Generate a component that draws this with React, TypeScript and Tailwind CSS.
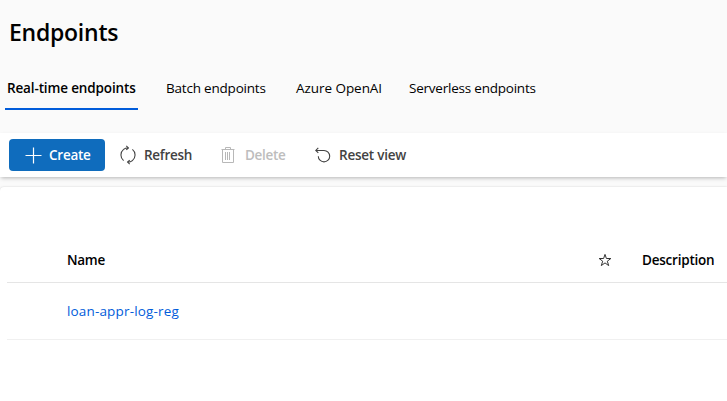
import React from "react";

function RefreshIcon() {
  return (
    <svg width="18" height="20" viewBox="0 0 18 20" fill="none" stroke="#424242" strokeWidth="1.1">
      <path d="M4.6 15.6A7.2 7.2 0 0 1 4.6 4.4Q6.3 2.9 9.2 2.9M13.4 4.4A7.2 7.2 0 0 1 13.4 15.6Q11.7 17.1 8.8 17.1" />
      <path d="M7.3 0.9 9.4 2.9 7.3 4.9M10.7 15.1 8.6 17.1 10.7 19.1" />
    </svg>
  );
}

function TrashIcon() {
  return (
    <svg width="14" height="16" viewBox="0 0 14 16" fill="none" stroke="#b8b8b8">
      <path d="M0.5 2.5h13M4.5 2.5v-2h5v2M1.5 2.5v13h11v-13M4.5 5v8M6.5 5v8M8.5 5v8" />
    </svg>
  );
}

function ResetIcon() {
  return (
    <svg width="16" height="16" viewBox="0 0 16 16" fill="none" stroke="#424242" strokeWidth="1.1">
      <path d="M3.3 0.9 0.8 3.4 3.3 5.9M0.8 3.5H9A5.7 5.7 0 1 1 3.3 9.2" />
    </svg>
  );
}

export default function App() {
  return (
    <div className="flex h-[401px] w-[727px] flex-col overflow-hidden bg-[#fafafa] font-['Open_Sans','Noto_Sans',sans-serif] text-[13.5px] leading-5 text-black">
      <header className="h-[133px] shrink-0">
        <h1 className="pt-4 pl-[9px] text-[23px] leading-8 font-semibold tracking-[-0.25px]">Endpoints</h1>
        <nav className="mt-[25px] flex h-[37px] pl-[5px] whitespace-nowrap">
          <div className="mr-7 w-[133px] border-b-2 border-[#015cda] pt-[5px] pl-0.5 font-semibold tracking-[-0.14px]">Real-time endpoints</div>
          <div className="w-[130px] pt-[5px] tracking-[-0.2px]">Batch endpoints</div>
          <div className="w-[113px] pt-[5px] tracking-[-0.05px]">Azure OpenAI</div>
          <div className="pt-[5px] tracking-[-0.22px]">Serverless endpoints</div>
        </nav>
      </header>
      <div className="flex h-11 shrink-0 items-center bg-white pl-[9px] font-semibold whitespace-nowrap text-[#424242] shadow-[0_2px_4px_-1px_rgba(0,0,0,0.28)]">
        <button className="flex h-8 w-24 items-center rounded-[4px] bg-[#0f6cbd] pl-4 text-white">
          <svg width="17" height="17" viewBox="0 0 17 17" stroke="white" strokeWidth="1.2"><path d="M8.5 0.5v16M0.5 8.5h16" /></svg>
          <span className="ml-[7px] tracking-[-0.25px]">Create</span>
        </button>
        <button className="ml-[14px] flex w-[102px] items-center"><RefreshIcon /><span className="ml-[7px] tracking-[-0.3px]">Refresh</span></button>
        <button className="flex w-[94px] items-center text-[#bdbdbd]"><TrashIcon /><span className="ml-[10px] tracking-[-0.3px]">Delete</span></button>
        <button className="flex items-center"><ResetIcon /><span className="ml-2 tracking-[-0.22px]">Reset view</span></button>
      </div>
      <main className="mt-[10px] grow rounded-tl-[4px] bg-white pt-[51px] pl-[7px] shadow-[0_0_2px_rgba(0,0,0,0.18)]">
        <div className="flex h-[45px] items-center border-b border-[#e5e5e5] pl-[60px] font-semibold">
          <span className="w-[531px] tracking-[-0.3px]">Name</span>
          <svg width="14" height="14" viewBox="0 0 14 14" fill="none" stroke="#333" strokeWidth="1"><path d="m7 1.4 1.4 4.1h4.5L9.3 8.2l1.4 4.4L7 9.9l-3.7 2.7 1.4-4.4L1.1 5.5h4.5Z" /></svg>
          <span className="ml-[30px] tracking-[-0.22px]">Description</span>
        </div>
        <div className="flex h-[57px] items-center border-b border-[#f0f0f0] pl-[60px] tracking-[0.16px] text-[#015cda]">loan-appr-log-reg</div>
      </main>
    </div>
  );
}
